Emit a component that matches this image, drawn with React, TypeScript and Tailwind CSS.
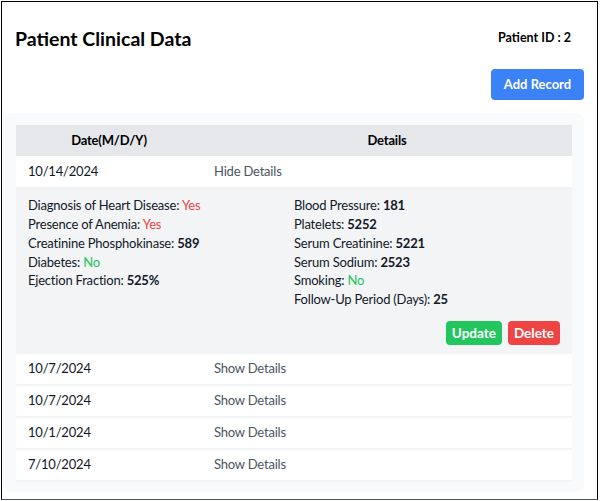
const records = [
  { date: '10/14/2024', open: true },
  { date: '10/7/2024', open: false },
  { date: '10/7/2024', open: false },
  { date: '10/1/2024', open: false },
  { date: '7/10/2024', open: false },
];

const Line = ({ label, children }: { label: string; children: React.ReactNode }) => (
  <p className="leading-[18.75px]">
    {label}: {children}
  </p>
);

const Details = () => (
  <tr className="bg-[#f3f4f6] border-b-2 border-[#f3f4f6]">
    <td colSpan={2} className="px-3 pt-[7px] pb-[7px]">
      <div className="grid grid-cols-2">
        <div>
          <Line label="Diagnosis of Heart Disease"><span className="text-[#ef4444]">Yes</span></Line>
          <Line label="Presence of Anemia"><span className="text-[#ef4444]">Yes</span></Line>
          <Line label="Creatinine Phosphokinase"><b>589</b></Line>
          <Line label="Diabetes"><span className="text-[#22c55e]">No</span></Line>
          <Line label="Ejection Fraction"><b>525%</b></Line>
        </div>
        <div>
          <Line label="Blood Pressure"><b>181</b></Line>
          <Line label="Platelets"><b>5252</b></Line>
          <Line label="Serum Creatinine"><b>5221</b></Line>
          <Line label="Serum Sodium"><b>2523</b></Line>
          <Line label="Smoking"><span className="text-[#22c55e]">No</span></Line>
          <Line label="Follow-Up Period (Days)"><b>25</b></Line>
        </div>
      </div>
      <div className="flex justify-end gap-1.5 mt-3 tracking-normal">
        <button className="bg-[#22c55e] text-white font-bold text-[13.5px] px-1.5 h-6 rounded">Update</button>
        <button className="bg-[#ef4444] text-white font-bold text-[13.5px] px-1.5 h-6 rounded">Delete</button>
      </div>
    </td>
  </tr>
);

export default function App() {
  return (
    <div className="p-[1px] bg-white">
      <div
        className="w-[597px] h-[499px] border border-black border-b-gray-600 bg-white text-[#111827] text-[13px] tracking-[-0.2px]"
        style={{ fontFamily: 'Lato, sans-serif' }}
      >
        <div className="flex justify-between items-center pl-[13px] pr-[26px] pt-[22px] tracking-normal">
          <h1 className="text-[19.5px] font-bold text-black">Patient Clinical Data</h1>
          <span className="text-[12.5px] font-bold text-black">Patient ID : 2</span>
        </div>
        <div className="flex justify-end pr-[13px] mt-[16px] tracking-normal">
          <button className="bg-[#3b82f6] text-white font-bold text-[13px] h-[31px] w-[93px] rounded">Add Record</button>
        </div>
        <div className="ml-[2px] mt-[13px] w-[580px] bg-[#f9fafb] rounded-lg px-3 pt-3 pb-[10px]">
          <table className="w-full border-collapse text-left">
            <thead>
              <tr className="bg-[#e5e7eb] font-bold text-black">
                <th className="w-[186px] h-[31px] text-center">Date(M/D/Y)</th>
                <th className="text-center">Details</th>
              </tr>
            </thead>
            <tbody>
              {records.map((r, i) => (
                <>
                  <tr key={i} className="bg-white border-b-2 border-[#f3f4f6]">
                    <td className="px-3 h-[32px]">{r.date}</td>
                    <td className="px-3 text-[#4b5563]">{r.open ? 'Hide Details' : 'Show Details'}</td>
                  </tr>
                  {r.open && <Details />}
                </>
              ))}
            </tbody>
          </table>
        </div>
      </div>
    </div>
  );
}
